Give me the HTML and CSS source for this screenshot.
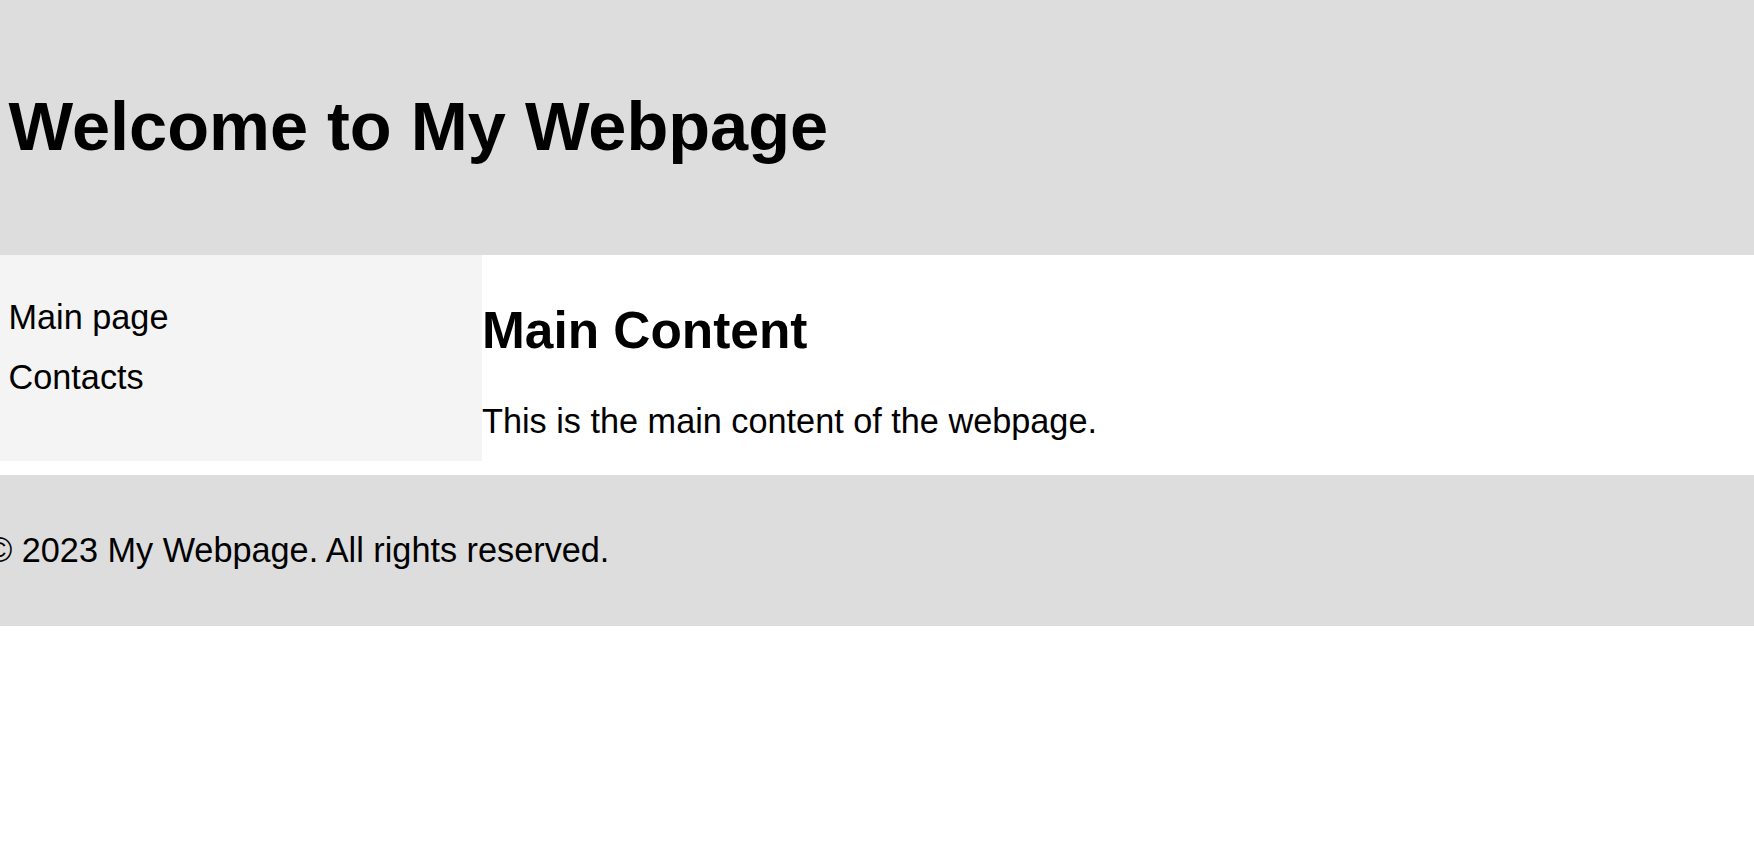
FILE: index.html
```html
<!DOCTYPE html>
<html lang="en">
  <head>
    <meta charset="UTF-8" />
    <meta name="viewport" content="width=device-width, initial-scale=1.0" />
    <title>My Webpage</title>
    <link rel="stylesheet" href="styles.css">
  </head>
  <body>
    <header class="site-header">
      <h1>Welcome to My Webpage</h1>
    </header>

    <div class="layout">
      <nav class="sidebar">
        <ul class="nav-list">
          <li><a href="#">Main page</a></li>
          <li><a href="#">Contacts</a></li>
        </ul>
      </nav>

      <main class="content">
        <h2>Main Content</h2>
        <p>This is the main content of the webpage.</p>
      </main>
    </div>

    <footer class="site-footer">
      <p>&copy; 2023 My Webpage. All rights reserved.</p>
    </footer>
  </body>
</html>
```

FILE: styles.css
```css
html {
  font-family: "Liberation Sans", Arial, sans-serif;
}

body {
  margin: 0;
  font-size: 34.25px;
  color: #000;
  background-color: #fff;
}

.site-header {
  background-color: #ddd;
  padding: 42px 8.5px 44px;
}

.site-header h1 {
  font-size: 68.5px;
  margin: 45px 0;
}

.layout {
  display: flex;
  align-items: flex-start;
}

.sidebar {
  box-sizing: border-box;
  width: 482px;
  flex-shrink: 0;
  padding: 8.5px;
  background-color: #f4f4f4;
}

.nav-list {
  list-style: none;
  padding: 0;
  margin: 34.25px 0;
}

.nav-list li {
  padding-bottom: 21.4px;
}

.nav-list a {
  color: #000;
  text-decoration: none;
}

.content {
  flex: 1;
  padding-top: 2px;
}

.content h2 {
  font-size: 51.4px;
  margin: 42.6px 0;
}

.content p {
  margin: 34.25px 0;
}

.site-footer {
  background-color: #ddd;
  padding: 21.4px 0;
}

.site-footer p {
  margin: 34.25px 0 34.25px -13px;
}
```
